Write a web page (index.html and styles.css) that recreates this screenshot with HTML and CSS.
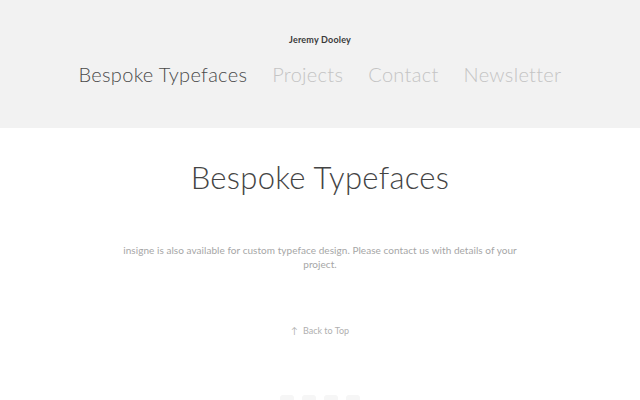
FILE: index.html
```html
<!DOCTYPE html>
<html>
<head>
<meta charset="utf-8">
<link rel="stylesheet" href="styles.css">
</head>
<body>
<header class="masthead">
  <div class="site-name">Jeremy Dooley</div>
  <nav class="nav">
    <a class="nav-item active" href="#">Bespoke Typefaces</a>
    <a class="nav-item" href="#">Projects</a>
    <a class="nav-item" href="#">Contact</a>
    <a class="nav-item" href="#">Newsletter</a>
  </nav>
</header>
<main class="content">
  <h1 class="title">Bespoke Typefaces</h1>
  <p class="intro">insigne is also available for custom typeface design. Please contact us with details of your project.</p>
  <a class="back-top" href="#"><span class="arrow">↑</span> Back to Top</a>
  <div class="social">
    <span class="dot"></span><span class="dot"></span><span class="dot"></span><span class="dot"></span>
  </div>
</main>
</body>
</html>
```
FILE: styles.css
```css
html, body {
  margin: 0;
  padding: 0;
  background: #fff;
  font-family: Lato, "Open Sans", sans-serif;
  overflow: hidden;
}
.masthead {
  background: #f2f2f2;
  height: 128px;
  display: flex;
  flex-direction: column;
  align-items: center;
  padding-top: 34px;
  box-sizing: border-box;
}
.site-name {
  font-size: 9px;
  font-weight: 700;
  color: #3a3a3a;
  letter-spacing: 0.2px;
  line-height: 12px;
}
.nav {
  display: flex;
  gap: 25px;
  margin-top: 14px;
}
.nav-item {
  font-size: 20px;
  font-weight: 300;
  color: #c4c4c4;
  text-decoration: none;
  line-height: 28px;
  letter-spacing: 0.3px;
}
.nav-item.active {
  color: #4a4a4a;
}
.content {
  display: flex;
  flex-direction: column;
  align-items: center;
}
.title {
  margin: 29px 0 0;
  font-size: 31px;
  font-weight: 300;
  color: #444;
  line-height: 40px;
  letter-spacing: 0.3px;
}
.intro {
  margin: 46px 0 0;
  width: 400px;
  text-align: center;
  font-size: 10px;
  line-height: 14px;
  font-weight: 400;
  letter-spacing: 0.05px;
  color: #a6a6a6;
}
.back-top {
  margin-top: 54px;
  font-size: 9px;
  color: #b0b0b0;
  text-decoration: none;
  line-height: 12px;
}
.arrow {
  margin-right: 3px;
}
.social {
  display: flex;
  gap: 8px;
  margin-top: 58px;
}
.dot {
  width: 14px;
  height: 14px;
  background: #f6f6f6;
  border-radius: 3px;
}
```
